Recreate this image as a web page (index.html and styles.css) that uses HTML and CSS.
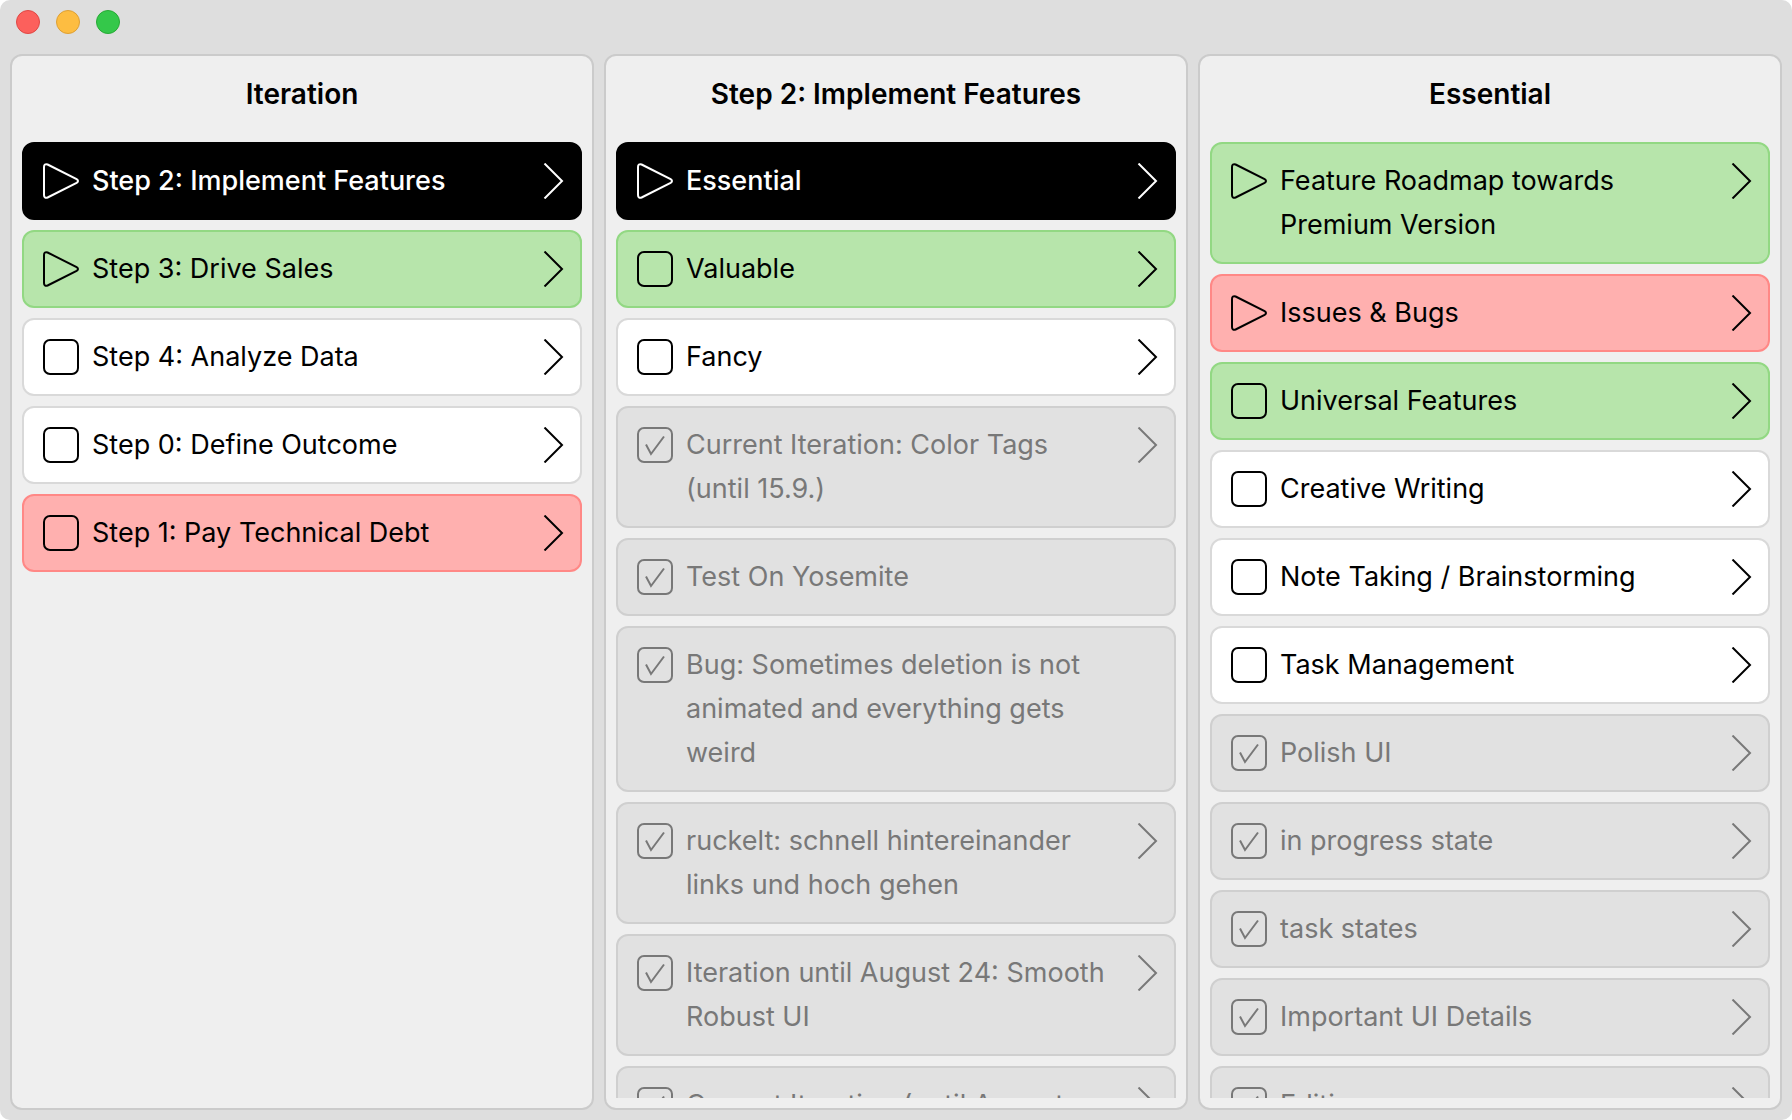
FILE: index.html
```html
<!DOCTYPE html>
<html lang="en">
<head>
<meta charset="utf-8">
<title>Iteration</title>
<meta name="viewport" content="width=device-width, initial-scale=1">
<link rel="stylesheet" href="styles.css">
</head>
<body>
<svg class="symbols" aria-hidden="true">
  <symbol id="play" viewBox="0 0 36 36"><path d="M1 4C1 1.7 2.4 .5 4.6 1.5L33.6 16.2Q36.4 18 33.6 19.8L4.6 34.5C2.4 35.5 1 34.3 1 32Z"/></symbol>
  <symbol id="chevron" viewBox="0 0 36 36"><path d="M8.5 .5L26 18L8.5 35.5"/></symbol>
  <symbol id="check" viewBox="0 0 36 36"><path d="M9 17.5L14 27L27 9.5"/></symbol>
</svg>
<div class="window">
  <header class="titlebar">
    <button class="light close" aria-label="Close"></button>
    <button class="light minimize" aria-label="Minimize"></button>
    <button class="light zoom" aria-label="Zoom"></button>
  </header>
  <main class="columns">
    <section class="column">
      <h2>Iteration</h2>
      <ul class="list">
        <li class="card selected"><button class="icon" aria-label="In progress"><svg><use href="#play"/></svg></button><span class="text">Step 2: Implement Features</span><button class="icon" aria-label="Open"><svg><use href="#chevron"/></svg></button></li>
        <li class="card green"><button class="icon" aria-label="In progress"><svg><use href="#play"/></svg></button><span class="text">Step 3: Drive Sales</span><button class="icon" aria-label="Open"><svg><use href="#chevron"/></svg></button></li>
        <li class="card"><span class="tick"><input type="checkbox" id="a3"></span><label class="text" for="a3">Step 4: Analyze Data</label><button class="icon" aria-label="Open"><svg><use href="#chevron"/></svg></button></li>
        <li class="card"><span class="tick"><input type="checkbox" id="a4"></span><label class="text" for="a4">Step 0: Define Outcome</label><button class="icon" aria-label="Open"><svg><use href="#chevron"/></svg></button></li>
        <li class="card red"><span class="tick"><input type="checkbox" id="a5"></span><label class="text" for="a5">Step 1: Pay Technical Debt</label><button class="icon" aria-label="Open"><svg><use href="#chevron"/></svg></button></li>
      </ul>
    </section>
    <section class="column">
      <h2>Step 2: Implement Features</h2>
      <ul class="list">
        <li class="card selected"><button class="icon" aria-label="In progress"><svg><use href="#play"/></svg></button><span class="text">Essential</span><button class="icon" aria-label="Open"><svg><use href="#chevron"/></svg></button></li>
        <li class="card green"><span class="tick"><input type="checkbox" id="b2"></span><label class="text" for="b2">Valuable</label><button class="icon" aria-label="Open"><svg><use href="#chevron"/></svg></button></li>
        <li class="card"><span class="tick"><input type="checkbox" id="b3"></span><label class="text" for="b3">Fancy</label><button class="icon" aria-label="Open"><svg><use href="#chevron"/></svg></button></li>
        <li class="card done"><span class="tick"><input type="checkbox" id="b4" checked><svg><use href="#check"/></svg></span><label class="text" for="b4">Current Iteration: Color Tags (until 15.9.)</label><button class="icon" aria-label="Open"><svg><use href="#chevron"/></svg></button></li>
        <li class="card done"><span class="tick"><input type="checkbox" id="b5" checked><svg><use href="#check"/></svg></span><label class="text" for="b5">Test On Yosemite</label></li>
        <li class="card done"><span class="tick"><input type="checkbox" id="b6" checked><svg><use href="#check"/></svg></span><label class="text" for="b6">Bug: Sometimes deletion is not animated and everything gets weird</label></li>
        <li class="card done"><span class="tick"><input type="checkbox" id="b7" checked><svg><use href="#check"/></svg></span><label class="text" for="b7">ruckelt: schnell hintereinander links und hoch gehen</label><button class="icon" aria-label="Open"><svg><use href="#chevron"/></svg></button></li>
        <li class="card done"><span class="tick"><input type="checkbox" id="b8" checked><svg><use href="#check"/></svg></span><label class="text" for="b8">Iteration until August 24: Smooth Robust UI</label><button class="icon" aria-label="Open"><svg><use href="#chevron"/></svg></button></li>
        <li class="card done"><span class="tick"><input type="checkbox" id="b9" checked><svg><use href="#check"/></svg></span><label class="text" for="b9">Current Iteration (until August</label><button class="icon" aria-label="Open"><svg><use href="#chevron"/></svg></button></li>
      </ul>
    </section>
    <section class="column">
      <h2>Essential</h2>
      <ul class="list">
        <li class="card green"><button class="icon" aria-label="In progress"><svg><use href="#play"/></svg></button><span class="text">Feature Roadmap towards Premium Version</span><button class="icon" aria-label="Open"><svg><use href="#chevron"/></svg></button></li>
        <li class="card red"><button class="icon" aria-label="In progress"><svg><use href="#play"/></svg></button><span class="text">Issues &amp; Bugs</span><button class="icon" aria-label="Open"><svg><use href="#chevron"/></svg></button></li>
        <li class="card green"><span class="tick"><input type="checkbox" id="c3"></span><label class="text" for="c3">Universal Features</label><button class="icon" aria-label="Open"><svg><use href="#chevron"/></svg></button></li>
        <li class="card"><span class="tick"><input type="checkbox" id="c4"></span><label class="text" for="c4">Creative Writing</label><button class="icon" aria-label="Open"><svg><use href="#chevron"/></svg></button></li>
        <li class="card"><span class="tick"><input type="checkbox" id="c5"></span><label class="text" for="c5">Note Taking / Brainstorming</label><button class="icon" aria-label="Open"><svg><use href="#chevron"/></svg></button></li>
        <li class="card"><span class="tick"><input type="checkbox" id="c6"></span><label class="text" for="c6">Task Management</label><button class="icon" aria-label="Open"><svg><use href="#chevron"/></svg></button></li>
        <li class="card done"><span class="tick"><input type="checkbox" id="c7" checked><svg><use href="#check"/></svg></span><label class="text" for="c7">Polish UI</label><button class="icon" aria-label="Open"><svg><use href="#chevron"/></svg></button></li>
        <li class="card done"><span class="tick"><input type="checkbox" id="c8" checked><svg><use href="#check"/></svg></span><label class="text" for="c8">in progress state</label><button class="icon" aria-label="Open"><svg><use href="#chevron"/></svg></button></li>
        <li class="card done"><span class="tick"><input type="checkbox" id="c9" checked><svg><use href="#check"/></svg></span><label class="text" for="c9">task states</label><button class="icon" aria-label="Open"><svg><use href="#chevron"/></svg></button></li>
        <li class="card done"><span class="tick"><input type="checkbox" id="c10" checked><svg><use href="#check"/></svg></span><label class="text" for="c10">Important UI Details</label><button class="icon" aria-label="Open"><svg><use href="#chevron"/></svg></button></li>
        <li class="card done"><span class="tick"><input type="checkbox" id="c11" checked><svg><use href="#check"/></svg></span><label class="text" for="c11">Editing</label><button class="icon" aria-label="Open"><svg><use href="#chevron"/></svg></button></li>
      </ul>
    </section>
  </main>
</div>
</body>
</html>
```
FILE: styles.css
```css
* { box-sizing: border-box; }

body {
  margin: 0;
  background: #fff;
  color: #000;
  font: 400 27px/44px Inter, "Liberation Sans", sans-serif;
}

button { padding: 0; border: 0; background: none; color: inherit; }

.symbols { display: none; }

.window {
  display: flex;
  flex-direction: column;
  height: 100vh;
  padding: 10px;
  gap: 20px;
  border-radius: 10px;
  background: #dedede;
}

.titlebar { display: flex; gap: 16px; padding: 0 6px; }

.light { width: 24px; height: 24px; border: 1px solid; border-radius: 50%; }
.close { background: #fc605c; border-color: #e04744; }
.minimize { background: #fdbd41; border-color: #dea034; }
.zoom { background: #34c84a; border-color: #27aa35; }

.columns {
  display: grid;
  grid-template-columns: repeat(3, minmax(0, 1fr));
  gap: 10px;
  flex: 1;
  min-height: 0;
}

.column {
  display: flex;
  flex-direction: column;
  min-height: 0;
  padding: 0 10px 10px;
  border: 2px solid #cbcbcb;
  border-radius: 12px;
  background: #efefef;
}

h2 {
  flex: none;
  margin: 0 0 10px;
  font-size: 28px;
  line-height: 76px;
  font-weight: 600;
  text-align: center;
}

.list {
  display: flex;
  flex-direction: column;
  gap: 10px;
  min-height: 0;
  margin: 0;
  padding: 0;
  overflow: hidden;
  list-style: none;
}

.card {
  display: grid;
  grid-template-columns: 36px minmax(0, 1fr) 36px;
  column-gap: 13px;
  flex: none;
  align-items: start;
  padding: 15px 8px 15px 19px;
  border: 2px solid #d9d9d9;
  border-radius: 12px;
  background: #fff;
}

.selected { background: #000; border-color: #000; color: #fff; font-weight: 500; }
.green { background: #b7e5ab; border-color: #92d883; }
.red { background: #ffb0af; border-color: #ff8886; }
.done { background: #e1e1e1; border-color: #cfcfcf; color: #787878; }

.icon, .tick { display: grid; width: 36px; height: 36px; margin: 4px 0; }

.tick > * { grid-area: 1 / 1; }

.tick input {
  width: 36px;
  height: 36px;
  margin: 0;
  appearance: none;
  color: inherit;
  border: 2px solid currentColor;
  border-radius: 7px;
}

svg {
  width: 36px;
  height: 36px;
  fill: none;
  stroke: currentColor;
  stroke-width: 2;
  pointer-events: none;
}
```
